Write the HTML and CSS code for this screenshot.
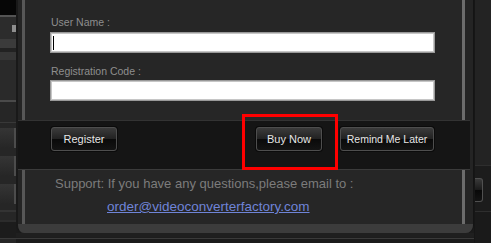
FILE: index.html
```html
<!DOCTYPE html>
<html lang="en">
<head>
  <meta charset="UTF-8">
  <title>Register</title>
  <link rel="stylesheet" href="styles.css">
</head>
<body>
  <div class="screen">
    <!-- app behind the dialog, left edge -->
    <div class="side side-left">
      <div class="s-black"></div>
      <div class="s-line"></div>
      <div class="s-row s-row-tab"><span class="s-tab"></span></div>
      <div class="s-band"></div>
      <div class="s-gap"></div>
      <div class="s-band2"></div>
      <div class="s-fill"></div>
      <div class="s-line2"></div>
      <div class="s-fill2"></div>
      <div class="s-btn"></div>
      <div class="s-btn"></div>
      <div class="s-btn"></div>
      <div class="s-lines"></div>
      <div class="s-foot"></div>
    </div>

    <div class="dialog-col">
      <div class="dialog">
        <div class="panel panel-top">
          <div class="label">User Name :</div>
          <div class="field"><span class="caret"></span></div>
          <div class="label label-2">Registration Code :</div>
          <div class="field"></div>
        </div>

        <div class="bar">
          <button class="btn btn-register">Register</button>
          <button class="btn btn-buy">Buy Now</button>
          <button class="btn btn-later">Remind Me Later</button>
          <div class="highlight"></div>
        </div>

        <div class="panel panel-support">
          <div class="support">Support: If you have any questions,please email to :</div>
          <a class="mail" href="mailto:order@videoconverterfactory.com">order@videoconverterfactory.com</a>
        </div>

        <div class="dialog-foot"></div>
      </div>
      <div class="under"></div>
    </div>

    <!-- app behind the dialog, right edge -->
    <div class="side side-right">
      <div class="r-top"></div>
      <div class="r-box"><span class="r-btn"></span></div>
      <div class="r-bottom"></div>
    </div>
  </div>
</body>
</html>
```

FILE: styles.css
```css
body {
  margin: 0;
  background: #1b1b1b;
  font-family: "Liberation Sans", Arial, sans-serif;
}
.screen {
  display: flex;
  width: 491px;
  height: 243px;
  overflow: hidden;
}

/* left strip of the main window */
.side-left {
  width: 16px;
  display: flex;
  flex-direction: column;
  background: #262626;
}
.s-black { height: 15px; background: #060606; }
.s-line { height: 2px; background: #545454; }
.s-row { height: 22px; background: #2c2c2c; }
.s-row-tab { display: flex; justify-content: flex-end; align-items: flex-start; }
.s-tab { width: 4px; height: 7px; margin-top: 8px; background: #8e8e8e; }
.s-band { height: 9px; background: #3b3b3b; }
.s-gap { height: 4px; background: #222; }
.s-band2 { height: 8px; background: #363636; }
.s-fill { height: 40px; background: #2a2a2a; }
.s-line2 { height: 2px; background: #4a4a4a; }
.s-fill2 {
  height: 21px;
  background: #262626;
  border-bottom: 1px solid #383838;
  box-sizing: border-box;
}
.s-btn {
  height: 20px;
  margin-top: 5px;
  margin-bottom: 3px;
  background: linear-gradient(to bottom, #353535, #262626);
  border-right: 2px solid #4c4c4c;
  box-sizing: border-box;
}
.s-lines {
  height: 8px;
  border-top: 2px solid #333;
  border-bottom: 2px solid #2c2c2c;
  margin-top: 3px;
}
.s-foot {
  flex: 1;
  background: #1c1c1c;
  border-bottom: 1px solid #3a3a3a;
  margin-bottom: 4px;
}

/* dialog */
.dialog-col {
  width: 458px;
  display: flex;
  flex-direction: column;
}
.dialog {
  height: 233px;
  box-sizing: border-box;
  background: #242424;
  border-left: 2px solid #191919;
  border-right: 1px solid #141414;
  border-radius: 0 0 8px 8px;
  display: flex;
  flex-direction: column;
  overflow: hidden;
}
.panel {
  margin: 0 8px 0 4px;
  background: #262626;
  border-left: 3px solid #575757;
  border-right: 3px solid #6c6c6c;
}
.panel-top {
  height: 120px;
  box-sizing: border-box;
  padding: 16px 0 0 25px;
}
.label {
  height: 12px;
  line-height: 12px;
  font-size: 10.5px;
  color: #8e8e8e;
  margin-left: 1px;
  margin-bottom: 4px;
}
.label-2 {
  margin-top: 12px;
  margin-bottom: 3px;
}
.field {
  width: 385px;
  height: 21px;
  box-sizing: border-box;
  background: #fff;
  border: 1px solid #999;
  box-shadow: inset 0 0 0 1px #c6c6c6;
  display: flex;
  align-items: center;
  padding-left: 2px;
}
.caret {
  width: 1px;
  height: 14px;
  background: #000;
}

.bar {
  position: relative;
  height: 50px;
  box-sizing: border-box;
  margin-right: 3px;
  background: #151515;
  border-top: 1px solid #333;
  border-bottom: 1px solid #3b3b3b;
  display: flex;
  align-items: flex-start;
  padding: 6px 0 0 33px;
}
.btn {
  height: 24px;
  box-sizing: border-box;
  padding: 0;
  border: 1px solid #4e4e4e;
  border-radius: 3px;
  box-shadow: 0 0 0 1px #0b0b0b;
  background: linear-gradient(to bottom, #3b3b3b, #222 48%, #0a0a0a 52%, #141414);
  color: #e6e6e6;
  font-family: "Liberation Sans", Arial, sans-serif;
  font-size: 11px;
  cursor: pointer;
}
.btn-register { width: 66px; }
.btn-buy { width: 66px; margin-left: 139px; }
.btn-later { width: 94px; margin-left: 18px; font-size: 10.5px; }
.highlight {
  position: absolute;
  left: 224px;
  top: -7px;
  width: 96px;
  height: 56px;
  box-sizing: border-box;
  border: 3px solid #f00;
  pointer-events: none;
}

.panel-support {
  height: 54px;
  box-sizing: border-box;
  padding: 6px 0 0 30px;
  display: flex;
  flex-direction: column;
  align-items: flex-start;
}
.support {
  font-size: 13px;
  line-height: 15px;
  color: #7c7c7c;
}
.mail {
  margin: 8px 0 0 52px;
  font-size: 13.5px;
  line-height: 15px;
  color: #6f84d8;
}

.dialog-foot {
  flex: 1;
  background: #3c3c3c;
}
.under {
  flex: 1;
  background: #1d1d1d;
  border-top: 4px solid #1f1f1f;
  border-bottom: 1px solid #3a3a3a;
  margin-bottom: 4px;
}

/* right strip */
.side-right {
  flex: 1;
  display: flex;
  flex-direction: column;
  background: #232323;
  border-left: 1px solid #161616;
}
.r-top { height: 165px; }
.r-box {
  height: 47px;
  background: #1c1c1c;
  border-top: 1px solid #2e2e2e;
  border-bottom: 1px solid #2e2e2e;
  padding-top: 12px;
  box-sizing: border-box;
}
.r-btn {
  display: block;
  width: 8px;
  height: 24px;
  border: 1px solid #505050;
  border-left: none;
  border-radius: 0 3px 3px 0;
  box-sizing: border-box;
  background: linear-gradient(to bottom, #3a3a3a, #1a1a1a 50%, #080808 51%, #141414);
}
.r-bottom { flex: 1; background: #1a1a1a; }
```
